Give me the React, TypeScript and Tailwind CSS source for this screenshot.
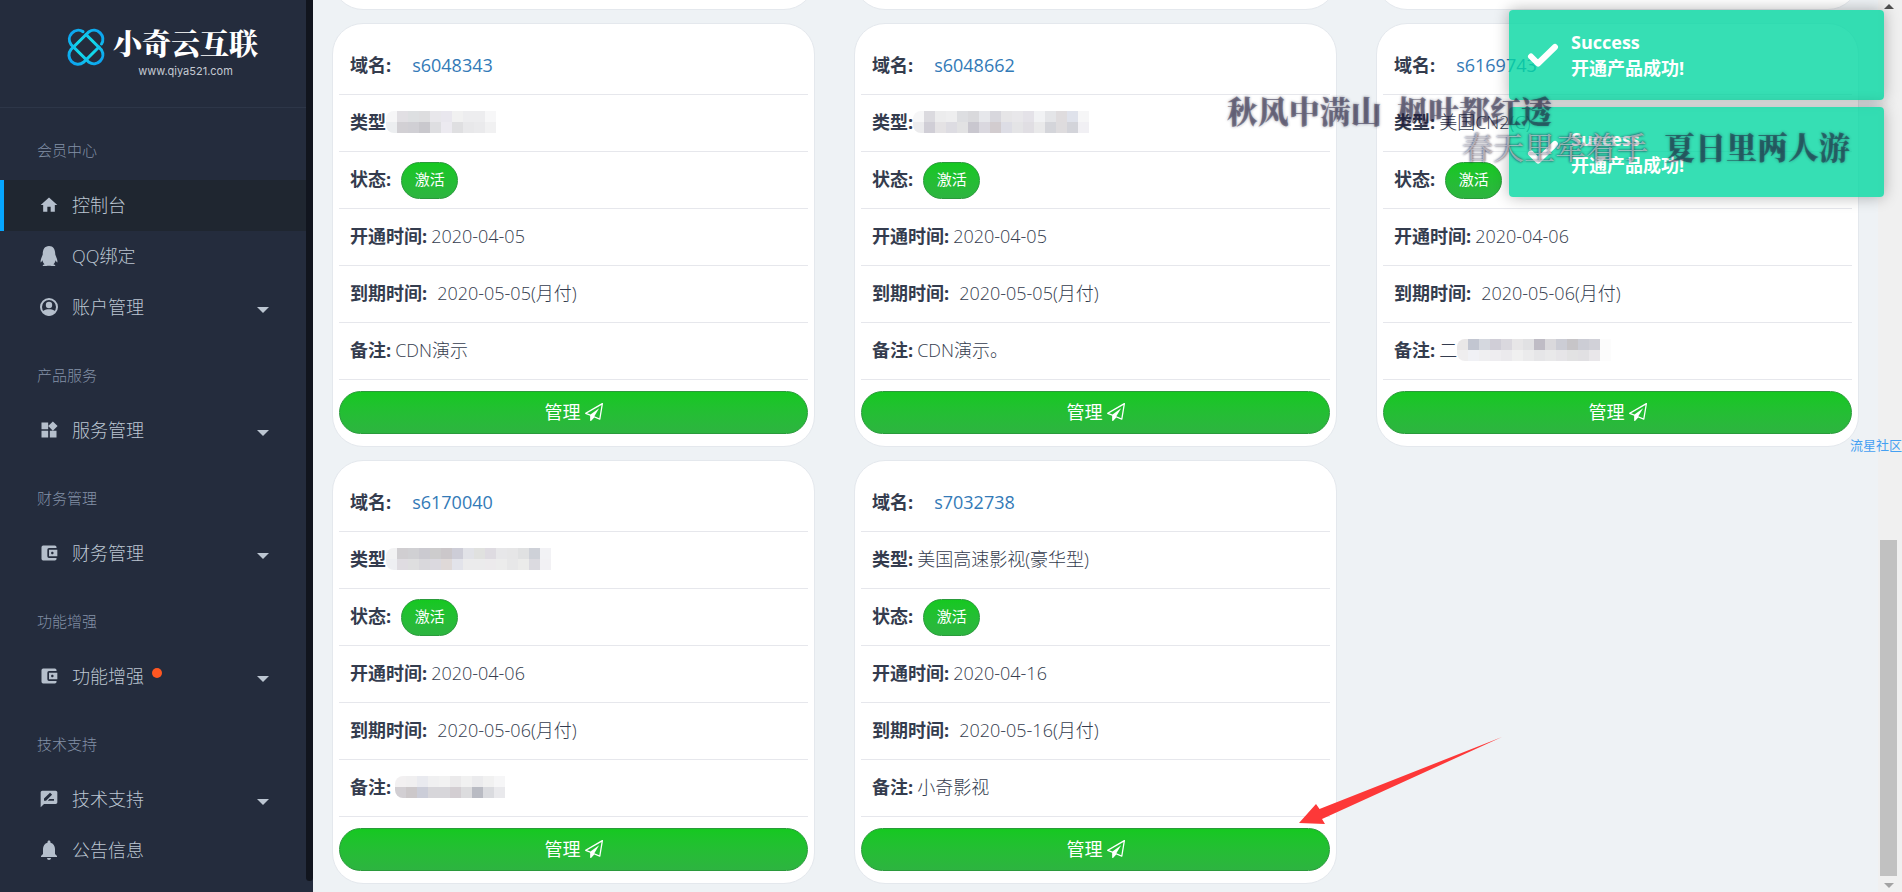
import type { ReactNode } from 'react';
import clsx from 'clsx';
import { FaQq } from 'react-icons/fa';
import {
  MdAccountBalanceWallet,
  MdHome,
  MdNotifications,
  MdRateReview,
  MdWidgets,
} from 'react-icons/md';

interface NavItem {
  label: string;
  icon: ReactNode;
  active?: boolean;
  expandable?: boolean;
  dot?: boolean;
}

interface NavSection {
  title: string;
  items: NavItem[];
}

interface Product {
  domain: string;
  type?: string;
  typeLabel?: string;
  typeMosaic?: string[][];
  created: string;
  expires: string;
  note?: string;
  noteMosaic?: string[][];
}

function AccountIcon() {
  return (
    <svg viewBox="0 0 20 20" className="size-5">
      <circle cx="10" cy="10" r="8" fill="none" stroke="currentColor" strokeWidth="2" />
      <circle cx="10" cy="8" r="3.200" fill="currentColor" />
      <path d="M3.500 14.500C5 12.800 7.500 12.200 10 12.200s5 .6 6.500 2.300C15 17 12.800 18.500 10 18.500S5 17 3.500 14.500Z" fill="currentColor" />
    </svg>
  );
}

const navSections: NavSection[] = [
  {
    title: '会员中心',
    items: [
      { label: '控制台', icon: <MdHome className="size-5" />, active: true },
      { label: 'QQ绑定', icon: <FaQq className="size-5" /> },
      { label: '账户管理', icon: <AccountIcon />, expandable: true },
    ],
  },
  {
    title: '产品服务',
    items: [{ label: '服务管理', icon: <MdWidgets className="size-5" />, expandable: true }],
  },
  {
    title: '财务管理',
    items: [{ label: '财务管理', icon: <MdAccountBalanceWallet className="size-5" />, expandable: true }],
  },
  {
    title: '功能增强',
    items: [
      { label: '功能增强', icon: <MdAccountBalanceWallet className="size-5" />, expandable: true, dot: true },
    ],
  },
  {
    title: '技术支持',
    items: [
      { label: '技术支持', icon: <MdRateReview className="size-5" />, expandable: true },
      { label: '公告信息', icon: <MdNotifications className="size-6" /> },
    ],
  },
];

const products: Product[] = [
  {
    domain: 's6048343',
    typeLabel: '类型',
    typeMosaic: [
      ['#f6f6f7', '#e1dfe3', '#dddfe1', '#dddddf', '#e8e7eb', '#e9e7ee', '#f1f1f1', '#ededef', '#ededef', '#f7f7f8'],
      ['#eceef0', '#d2d0d4', '#d0cfd4', '#c9c8cd', '#dedee1', '#eceaf0', '#dfdfe1', '#e8e8ea', '#eaeaec', '#f1f1f2'],
    ],
    created: '2020-04-05',
    expires: '2020-05-05(月付)',
    note: 'CDN演示',
  },
  {
    domain: 's6048662',
    typeMosaic: [
      ['#f6f6f7', '#dbdadf', '#ececed', '#eeeeef', '#dddee1', '#d9d9dc', '#e6e7eb', '#d8d7dd', '#e6e5e7', '#e8e7ea', '#e4e2e8', '#f1f2f4', '#e4e5e8', '#dfdcde', '#dfe2eb', '#f6f6f7'],
      ['#ebebed', '#d0ced6', '#e4e2e4', '#dddce2', '#e2e2e3', '#c9c7cf', '#dad8df', '#d2cccf', '#dddde5', '#e4e4e6', '#e0dee3', '#e9e9ea', '#d4d5da', '#dedcde', '#d3d4da', '#f1f0f4'],
    ],
    created: '2020-04-05',
    expires: '2020-05-05(月付)',
    note: 'CDN演示。',
  },
  {
    domain: 's6169743',
    type: '美国CN2(C)',
    created: '2020-04-06',
    expires: '2020-05-06(月付)',
    note: '二',
    noteMosaic: [
      ['#e9e7e7', '#c2c6d1', '#d5d8df', '#d0ced7', '#dad8de', '#e7e6e7', '#e1e1e3', '#bfbcc5', '#dad9dc', '#cccdd5', '#c7c5c8', '#cccdd5', '#d1d1d8', '#fcfcfc'],
      ['#efeeef', '#f0f1f5', '#efeff1', '#eeedf0', '#ebeaed', '#f0f0f0', '#ebebec', '#e6e6e8', '#e9e9ea', '#e6e5e8', '#e2e2e3', '#e1e0e3', '#e9e7ea', '#fcfcfc'],
    ],
  },
  {
    domain: 's6170040',
    typeLabel: '类型',
    typeMosaic: [
      ['#f2f2f3', '#d0ced1', '#d0d0d3', '#cbcad0', '#cdcccd', '#cbc7ca', '#cdcdd7', '#e1e2e7', '#e0e1df', '#dedbe1', '#e7e7e9', '#e6e6e7', '#e0e1e2', '#ced1d8', '#f2f2f5'],
      ['#eeeff2', '#dfdce1', '#dededf', '#d9d8dc', '#dbd9df', '#dfd9d8', '#e2e3ea', '#ebebec', '#ebebec', '#eceaec', '#ececec', '#e7e7e8', '#ebebea', '#dbdae0', '#f2f1f4'],
    ],
    created: '2020-04-06',
    expires: '2020-05-06(月付)',
    noteMosaic: [
      ['#f2f0f1', '#f0eff0', '#e9eaef', '#f0f0f1', '#f2f2f2', '#ebeaeb', '#f1f1f1', '#ebebed', '#f1f1f1', '#f6f6f7'],
      ['#d2cfd3', '#ccc8ca', '#cbcdd8', '#d7d6da', '#d7d6da', '#d3ced2', '#dcdcde', '#b9bbc3', '#dadbdf', '#e9e9ec'],
    ],
  },
  {
    domain: 's7032738',
    type: '美国高速影视(豪华型)',
    created: '2020-04-16',
    expires: '2020-05-16(月付)',
    note: '小奇影视',
  },
];

function Logo() {
  return (
    <a href="#" className="flex h-27 items-start border-b border-[#2d3648] pt-[27px] pl-[66px]">
      <svg viewBox="0 0 40 40" className="size-10 shrink-0" fill="none" strokeWidth="3" strokeLinecap="round">
        <defs>
          <linearGradient id="logo-a" x1="0" y1="0" x2="1" y2="1">
            <stop offset="0" stopColor="#0b9cf0" />
            <stop offset="0.5" stopColor="#13dcea" />
            <stop offset="1" stopColor="#0b9cf0" />
          </linearGradient>
          <linearGradient id="logo-b" x1="1" y1="0" x2="0" y2="1">
            <stop offset="0" stopColor="#0b9cf0" />
            <stop offset="0.5" stopColor="#13dcea" />
            <stop offset="1" stopColor="#0b9cf0" />
          </linearGradient>
        </defs>
        <path
          stroke="url(#logo-a)"
          d="M17 4.600A9 9 0 0 0 5 17.500L23 35.300A9 9 0 0 0 35.500 23L20 7.500M5 17.500L7.500 20"
        />
        <path
          stroke="url(#logo-b)"
          d="M35.500 17A9 9 0 0 0 23 4.700L5 22.500A9 9 0 0 0 17.500 35.300L33 20M4.500 23"
        />
      </svg>
      <div className="ml-[7px] flex flex-col items-center">
        <span className="font-['Noto_Serif_CJK_SC','Noto_Sans_CJK_SC',serif] text-[29px] leading-8 font-black text-white">
          小奇云互联
        </span>
        <span className="mt-1 font-[Inter,sans-serif] text-[11px] leading-4 text-[#c5cad3]">www.qiya521.com</span>
      </div>
    </a>
  );
}

function NavLink({ item }: { item: NavItem }) {
  return (
    <a
      href="#"
      className={clsx(
        'flex h-[51px] items-center border-l-4 pr-[37px] pb-0.5 pl-[33px] text-lg font-light text-[#bcc6d2]',
        item.active ? 'border-[#06a6ff] bg-[#1f2630]' : 'border-transparent',
      )}
    >
      <span className="flex w-6 justify-center text-[#b5bfcc]">{item.icon}</span>
      <span className="ml-[11px]">{item.label}</span>
      {item.dot && <span className="mb-1.5 ml-2 size-2.5 rounded-full bg-[#ff5722]" />}
      {item.expandable && (
        <svg viewBox="0 0 12 6" className="mt-1.5 ml-auto h-1.5 w-3" fill="currentColor">
          <path d="M0 0h12L6 6z" />
        </svg>
      )}
    </a>
  );
}

function Sidebar() {
  return (
    <aside className="flex h-full w-[313px] shrink-0 bg-[#242c3d]">
      <nav className="flex-1">
        <Logo />
        {navSections.map((section) => (
          <div key={section.title}>
            <h2 className="h-[72px] pt-[26px] pl-[37px] text-[15px] leading-8 font-light text-[#8391a7]">
              {section.title}
            </h2>
            {section.items.map((item) => (
              <NavLink key={item.label} item={item} />
            ))}
          </div>
        ))}
      </nav>
      <div className="mb-[11px] w-[7px] rounded-b bg-[#11151e]" />
    </aside>
  );
}

function Mosaic({ rows }: { rows: string[][] }) {
  return (
    <span className="flex flex-col overflow-hidden rounded-l-lg" aria-hidden="true">
      {rows.map((cells, r) => (
        <span key={r} className="flex">
          {cells.map((color, c) => (
            <span key={c} className="size-[11px]" style={{ backgroundColor: color }} />
          ))}
        </span>
      ))}
    </span>
  );
}

function Row({ label, children }: { label: string; children: ReactNode }) {
  return (
    <div className="flex h-[57px] items-center border-b border-[#e6e7ec] px-[11px] pb-0.5">
      <dt className="font-bold">{label}</dt>
      <dd className="flex items-center font-light">{children}</dd>
    </div>
  );
}

const greenButton =
  'rounded-full border border-[#2a9a3b] bg-linear-to-b from-[#15c820] to-[#2db440] text-white';

function PaperPlane() {
  return (
    <svg viewBox="0 0 1792 1792" className="size-[18px]" fill="currentColor">
      <path d="M1764 11q33 24 27 64l-256 1536q-5 29-32 45-14 8-31 8-11 0-24-5l-527-215-298 327q-18 21-47 21-14 0-23-4-19-7-30-23.500t-11-36.500v-452l-472-193q-37-14-40-55-3-39 32-59l1664-960q35-21 68 2zm-342 1499l221-1323-1434 827 336 137 863-639-478 797z" />
    </svg>
  );
}

function ProductCard({ product }: { product: Product }) {
  return (
    <article className="rounded-[31px] border border-[#e4e8ed] bg-white px-1.5 pt-3.5 pb-3 text-lg text-[#343c4e]">
      <dl>
        <Row label="域名:">
          <a href="#" className="ml-[21px] font-normal text-[#337ab7]">
            {product.domain}
          </a>
        </Row>
        <Row label={product.typeLabel ?? '类型:'}>
          {product.type && <span className="ml-1">{product.type}</span>}
          {product.typeMosaic && <Mosaic rows={product.typeMosaic} />}
        </Row>
        <Row label="状态:">
          <button type="button" className={clsx(greenButton, 'mt-0.5 ml-2.5 h-[37px] w-[57px] text-[15px] font-normal')}>
            激活
          </button>
        </Row>
        <Row label="开通时间:">
          <span className="ml-1">{product.created}</span>
        </Row>
        <Row label="到期时间:">
          <span className="ml-2.5">{product.expires}</span>
        </Row>
        <Row label="备注:">
          <span className="ml-1">{product.note}</span>
          {product.noteMosaic && <Mosaic rows={product.noteMosaic} />}
        </Row>
      </dl>
      <button
        type="button"
        className={clsx(greenButton, 'mt-[11px] flex h-[43px] w-full items-center justify-center gap-1 pb-0.5')}
      >
        管理
        <PaperPlane />
      </button>
    </article>
  );
}

function Toast({ title, message }: { title: string; message: string }) {
  return (
    <div
      role="status"
      className="flex h-[90px] w-[375px] items-center rounded bg-[#04d7a1]/80 pl-[18px] text-white shadow-[0_0_15px_#0000004d]"
    >
      <svg viewBox="0 0 32 24" className="h-6 w-8" fill="none" stroke="currentColor" strokeWidth="6">
        <path d="M4 13.500L11 20.500L28 4" strokeLinejoin="round" strokeLinecap="round" />
      </svg>
      <div className="ml-3 text-lg leading-[26px] font-bold">
        <p>{title}</p>
        <p>{message}</p>
      </div>
    </div>
  );
}

const lyricClass =
  "pointer-events-none absolute font-['KaiTi','Noto_Serif_CJK_SC','Noto_Sans_CJK_SC',serif] text-[31px] leading-8 whitespace-pre";

function Scrollbar() {
  return (
    <div className="flex h-full w-6 shrink-0 flex-col bg-[#f0f0f0] pr-[5px] pl-0.5" aria-hidden="true">
      <svg viewBox="0 0 10 5" className="mx-auto mt-1 h-[5px] w-2.5 shrink-0" fill="#505050">
        <path d="M0 5L5 0L10 5z" />
      </svg>
      <div className="flex-[531] shrink-0" />
      <div className="flex-[336] shrink-0 bg-[#c1c1c1]" />
      <svg viewBox="0 0 10 5" className="mx-auto mt-[7px] mb-1 h-[5px] w-2.5 shrink-0" fill="#a3a3a3">
        <path d="M0 0L5 5L10 0z" />
      </svg>
    </div>
  );
}

export default function App() {
  return (
    <div className="relative flex h-screen overflow-hidden bg-[#eef2f5] font-['Open_Sans','Noto_Sans_CJK_SC',sans-serif]">
      <Sidebar />
      <main className="flex h-full min-w-0 flex-1 flex-col justify-end overflow-hidden px-[19px] pb-2">
        <div className="grid shrink-0 grid-cols-3 gap-x-[39px] gap-y-[13px]">
          {[0, 1, 2].map((i) => (
            <div key={i} className="h-24 rounded-[31px] border border-[#e4e8ed] bg-white" />
          ))}
          {products.map((product) => (
            <ProductCard key={product.domain} product={product} />
          ))}
        </div>
      </main>
      <Scrollbar />

      <div className="absolute top-2.5 right-[18px] flex flex-col gap-[7px]">
        <Toast title="Success" message="开通产品成功!" />
        <Toast title="Success" message="开通产品成功!" />
      </div>

      {/* drifting lyrics */}
      <p className={clsx(lyricClass, 'top-[94px] right-[350px] font-black text-[#1c1838]/50 [text-shadow:0_0_3px_#1c183866]')}>
        秋风中满山  枫叶都红透
      </p>
      <p className={clsx(lyricClass, 'top-[130px] right-[254px] font-normal text-white/50 [text-shadow:0_0_2px_#1c1838cc,0_0_3px_#1c183866]')}>
        春天里牵着手
      </p>
      <p className={clsx(lyricClass, 'top-[130px] right-[52px] font-black text-[#1c1838]/50 [text-shadow:0_0_3px_#1c183866]')}>
        夏日里两人游
      </p>

      <a href="#" className="absolute top-[435px] right-0 text-[13px] leading-5 text-[#45a0f2]">
        流星社区
      </a>

      <svg viewBox="0 0 204 90" className="absolute right-[400px] bottom-[66px] h-[90px] w-[204px]" fill="#fd3838">
        <path d="M1 87L18 68L21.500 73L204 1L24 83L27 88z" />
      </svg>
    </div>
  );
}
